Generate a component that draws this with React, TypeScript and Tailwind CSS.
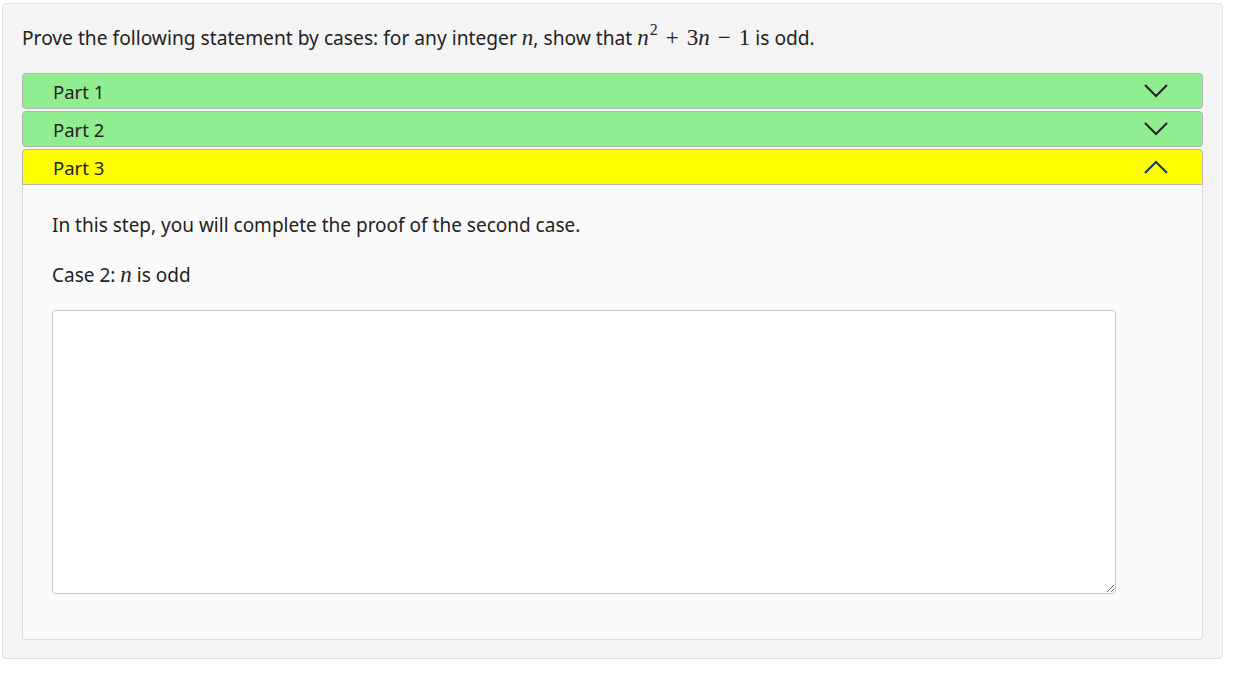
import React from "react";

const sans = { fontFamily: '"Noto Sans", "Open Sans", sans-serif' };

function M({ children }: { children: React.ReactNode }) {
  return <span className="font-['Liberation_Serif',serif] text-[23px]">{children}</span>;
}

function ChevronDown() {
  return (
    <svg width="26" height="16" viewBox="0 0 26 16" fill="none">
      <path d="M2 2 L13 13 L24 2" stroke="#222" strokeWidth="2" />
    </svg>
  );
}
function ChevronUp() {
  return (
    <svg width="26" height="16" viewBox="0 0 26 16" fill="none">
      <path d="M2 14 L13 3 L24 14" stroke="#0a3a82" strokeWidth="2" />
    </svg>
  );
}

function Header({ label, bg, open }: { label: string; bg: string; open?: boolean }) {
  return (
    <div
      className={`h-[36px] flex items-center justify-between pl-[30px] pr-[33px] border border-[#b4b4b4] ${open ? "rounded-t-[4px]" : "rounded-[4px]"} ${bg}`}
    >
      <span className="text-[18.5px] text-[#222] pt-[2px]">{label}</span>
      {open ? <ChevronUp /> : <ChevronDown />}
    </div>
  );
}

export default function App() {
  return (
    <div className="w-[1257px] h-[675px] bg-white pt-[3px] pl-[2px]" style={sans}>
      <div className="w-[1221px] h-[656px] bg-[#f4f4f4] border border-[#e2e2e2] rounded-[4px] px-[19px] pt-[20px]">
        <p className="text-[19.2px] text-[#222] leading-[28px] h-[28px]">
          Prove the following statement by cases: for any integer <M><i>n</i></M>, show that{" "}
          <M>
            <i>n</i>
            <span className="text-[16px] relative top-[-10px] ml-[1px]">2</span>
            <span className="mx-[8px]">+</span>3<i>n</i>
            <span className="mx-[8px]">−</span>1
          </M>{" "}
          is odd.
        </p>
        <div className="mt-[21px] flex flex-col gap-[2px]">
          <Header label="Part 1" bg="bg-[#90ee90]" />
          <Header label="Part 2" bg="bg-[#90ee90]" />
          <div>
            <Header label="Part 3" bg="bg-[#ffff00]" open />
            <div className="h-[455px] bg-[#fafafa] border border-t-0 border-[#dcdcdc] rounded-b-[4px] pl-[29px] pr-[86px] pt-[26px]">
              <p className="text-[19px] text-[#222] leading-[28px]">
                In this step, you will complete the proof of the second case.
              </p>
              <p className="text-[19px] text-[#222] leading-[28px] mt-[22px]">
                Case 2: <M><i>n</i></M> is odd
              </p>
              <textarea className="mt-[21px] block w-full h-[284px] bg-white border border-[#c8c8c8] rounded-[4px] resize-y outline-none" />
            </div>
          </div>
        </div>
      </div>
    </div>
  );
}
